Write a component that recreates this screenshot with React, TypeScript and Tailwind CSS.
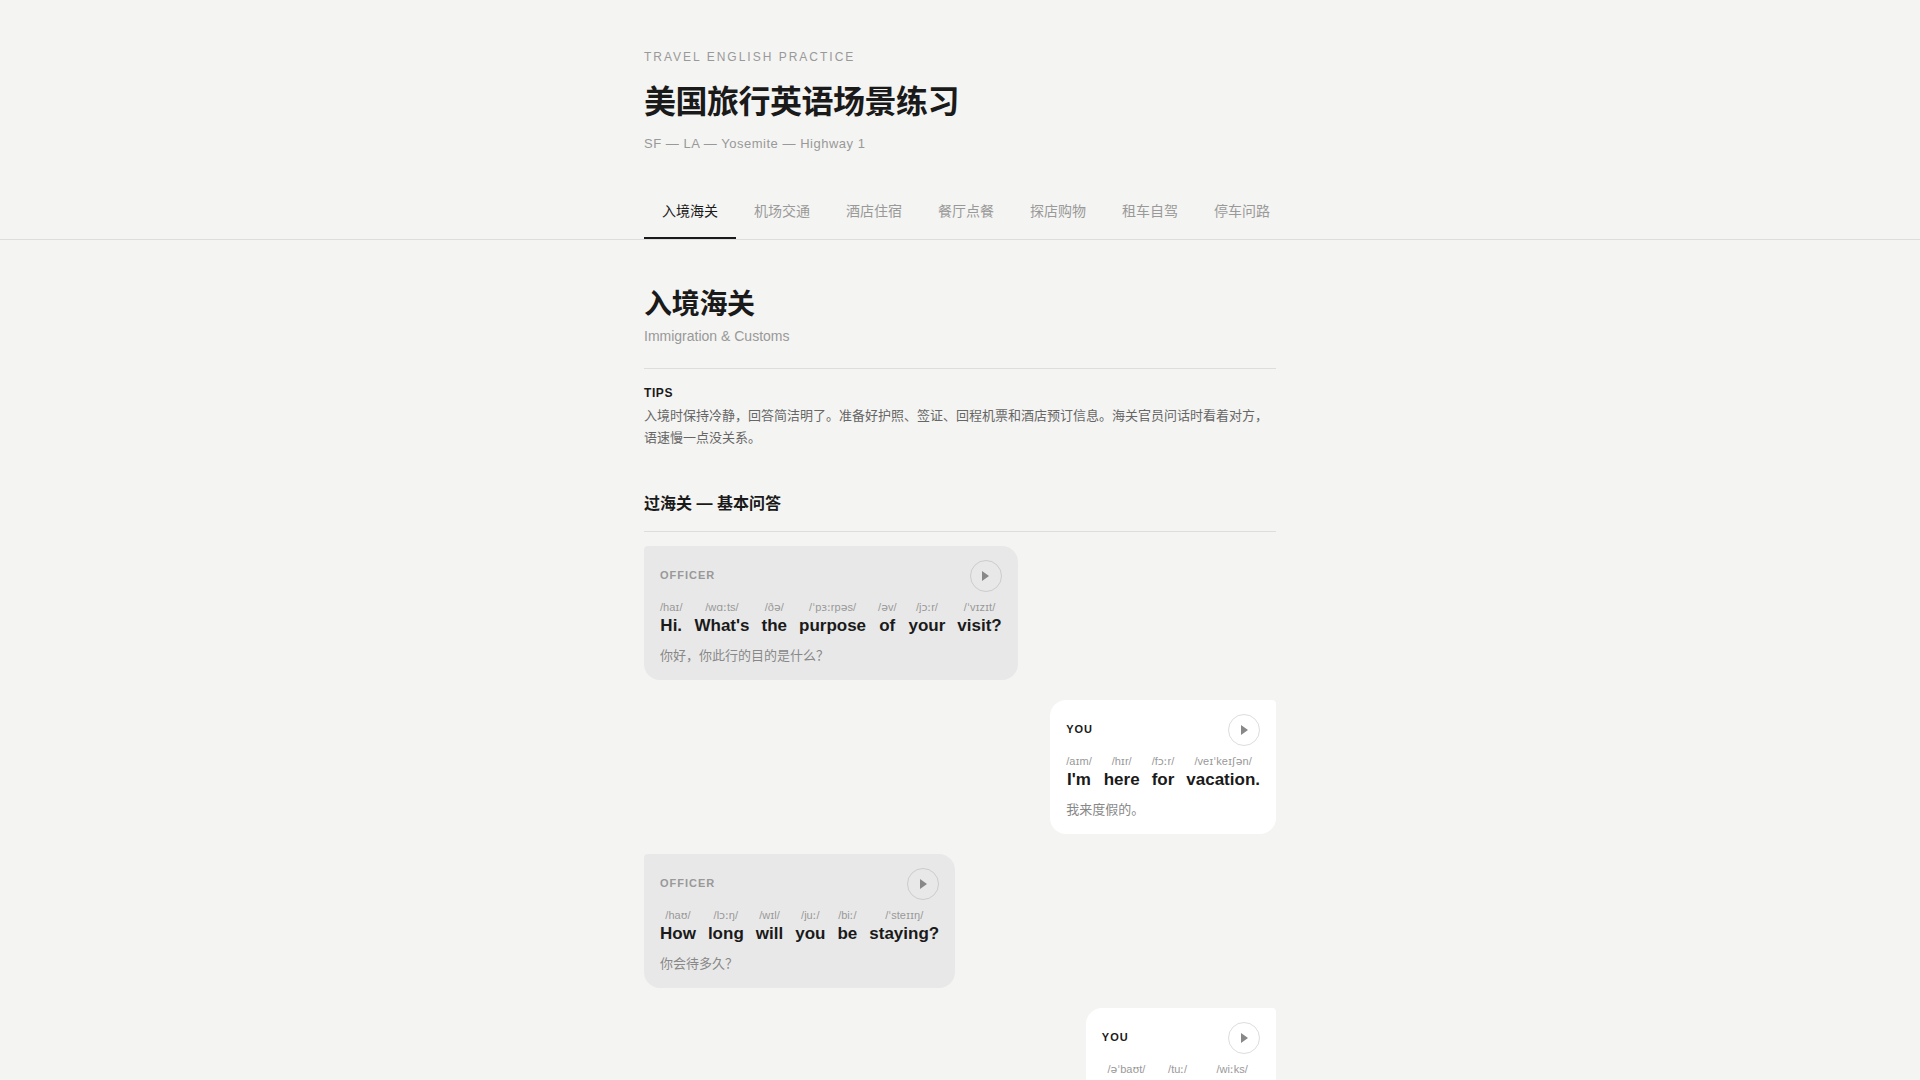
import { useState } from "react";

type Word = { ipa: string; text: string };

type Line = {
  speaker: "officer" | "you";
  words: Word[];
  translation: string;
};

const tabs = ["入境海关", "机场交通", "酒店住宿", "餐厅点餐", "探店购物", "租车自驾", "停车问路"];

const lines: Line[] = [
  {
    speaker: "officer",
    words: [
      { ipa: "/haɪ/", text: "Hi." },
      { ipa: "/wɑːts/", text: "What's" },
      { ipa: "/ðə/", text: "the" },
      { ipa: "/ˈpɜːrpəs/", text: "purpose" },
      { ipa: "/əv/", text: "of" },
      { ipa: "/jɔːr/", text: "your" },
      { ipa: "/ˈvɪzɪt/", text: "visit?" },
    ],
    translation: "你好，你此行的目的是什么？",
  },
  {
    speaker: "you",
    words: [
      { ipa: "/aɪm/", text: "I'm" },
      { ipa: "/hɪr/", text: "here" },
      { ipa: "/fɔːr/", text: "for" },
      { ipa: "/veɪˈkeɪʃən/", text: "vacation." },
    ],
    translation: "我来度假的。",
  },
  {
    speaker: "officer",
    words: [
      { ipa: "/haʊ/", text: "How" },
      { ipa: "/lɔːŋ/", text: "long" },
      { ipa: "/wɪl/", text: "will" },
      { ipa: "/juː/", text: "you" },
      { ipa: "/biː/", text: "be" },
      { ipa: "/ˈsteɪɪŋ/", text: "staying?" },
    ],
    translation: "你会待多久？",
  },
  {
    speaker: "you",
    words: [
      { ipa: "/əˈbaʊt/", text: "About" },
      { ipa: "/tuː/", text: "two" },
      { ipa: "/wiːks/", text: "weeks." },
    ],
    translation: "大概两周。",
  },
];

// phonetic symbols use DejaVu, plain letters keep the body font
function Ipa({ value }: { value: string }) {
  return (
    <span className="text-[11px] leading-[14px] whitespace-nowrap text-[#999]">
      {value.split(/([\u0250-\u02ff]+)/).map((part, i) =>
        i % 2 === 1 ? (
          <span key={i} className="font-['DejaVu_Sans',sans-serif] leading-none">
            {part}
          </span>
        ) : (
          part
        )
      )}
    </span>
  );
}

function Bubble({ line }: { line: Line }) {
  const isYou = line.speaker === "you";

  return (
    <div
      className={`max-w-full px-4 py-3.5 ${
        isYou
          ? "self-end rounded-2xl rounded-tr-[4px] bg-white"
          : "self-start rounded-2xl rounded-tl-[4px] bg-[#e8e8e8]"
      }`}
    >
      <div className="mb-2 flex items-center justify-between">
        <span
          className={`pb-0.5 text-[11px] leading-4 font-bold tracking-[1px] uppercase ${
            isYou ? "text-[#1a1a1a]" : "text-[#999]"
          }`}
        >
          {line.speaker}
        </span>
        <button
          aria-label="Play"
          className={`flex size-8 items-center justify-center rounded-full border ${
            isYou ? "border-[#ddd]" : "border-[#ccc]"
          }`}
        >
          <svg className="h-2.5 w-[7px]" viewBox="0 0 7 10" fill="#888">
            <path d="M0 0L7 5L0 10Z" />
          </svg>
        </button>
      </div>
      <div className="flex flex-wrap gap-x-3">
        {line.words.map((word) => (
          <span key={word.text} className="flex flex-col items-center">
            <Ipa value={word.ipa} />
            <span className="text-[17px] leading-6 font-bold text-[#1a1a1a]">{word.text}</span>
          </span>
        ))}
      </div>
      <p className="mt-2 text-[13px] leading-5 text-[#888]">{line.translation}</p>
    </div>
  );
}

export default function App() {
  const [active, setActive] = useState(0);

  return (
    <div
      lang="zh-CN"
      className="min-h-screen bg-[#f4f4f2] font-['Liberation_Sans','Noto_Sans_CJK_SC',sans-serif] text-[#1a1a1a]"
    >
      <header className="mx-auto max-w-[680px] px-6 pt-12 pb-[33px]">
        <p className="text-xs leading-[18px] tracking-[2px] text-[#999] uppercase">Travel English Practice</p>
        <h1 className="mt-4 text-[32px] leading-10 font-bold tracking-[-0.016em]">美国旅行英语场景练习</h1>
        <p className="mt-3 text-[13px] leading-5 tracking-[0.04em] text-[#999]">SF — LA — Yosemite — Highway 1</p>
      </header>

      <nav className="border-b border-[#ddd]">
        <div className="mx-auto max-w-[680px] px-6">
          <div className="flex overflow-x-auto [scrollbar-width:none]">
            {tabs.map((tab, i) => (
              <button
                key={tab}
                onClick={() => setActive(i)}
                className={`shrink-0 border-b-2 px-[18px] pt-3 pb-3.5 text-sm leading-6 whitespace-nowrap ${
                  i === active ? "border-[#1a1a1a] text-[#1a1a1a]" : "border-transparent text-[#999]"
                }`}
              >
                {tab}
              </button>
            ))}
          </div>
        </div>
      </nav>

      <main className="mx-auto max-w-[680px] px-6 pt-11 pb-20">
        <div className="border-b border-[#ddd] pb-[22px]">
          <h2 className="text-[28px] leading-[42px] font-bold tracking-[-0.011em]">{tabs[active]}</h2>
          <p className="text-sm leading-5 text-[#999]">Immigration &amp; Customs</p>
        </div>

        <div className="mt-4 text-[#666]">
          <h3 className="text-xs leading-4 font-bold tracking-[0.05em] text-[#1a1a1a]">TIPS</h3>
          <p className="mt-1 text-[13px] leading-[22px]">
            入境时保持冷静，回答简洁明了。准备好护照、签证、回程机票和酒店预订信息。海关官员问话时看着对方，语速慢一点没关系。
          </p>
        </div>

        <section className="mt-10">
          <h3 className="border-b border-[#ddd] pb-3 text-base leading-[30px] font-bold">过海关 — 基本问答</h3>
          <div className="mt-3.5 flex flex-col gap-5">
            {lines.map((line) => (
              <Bubble key={line.translation} line={line} />
            ))}
          </div>
        </section>
      </main>
    </div>
  );
}
